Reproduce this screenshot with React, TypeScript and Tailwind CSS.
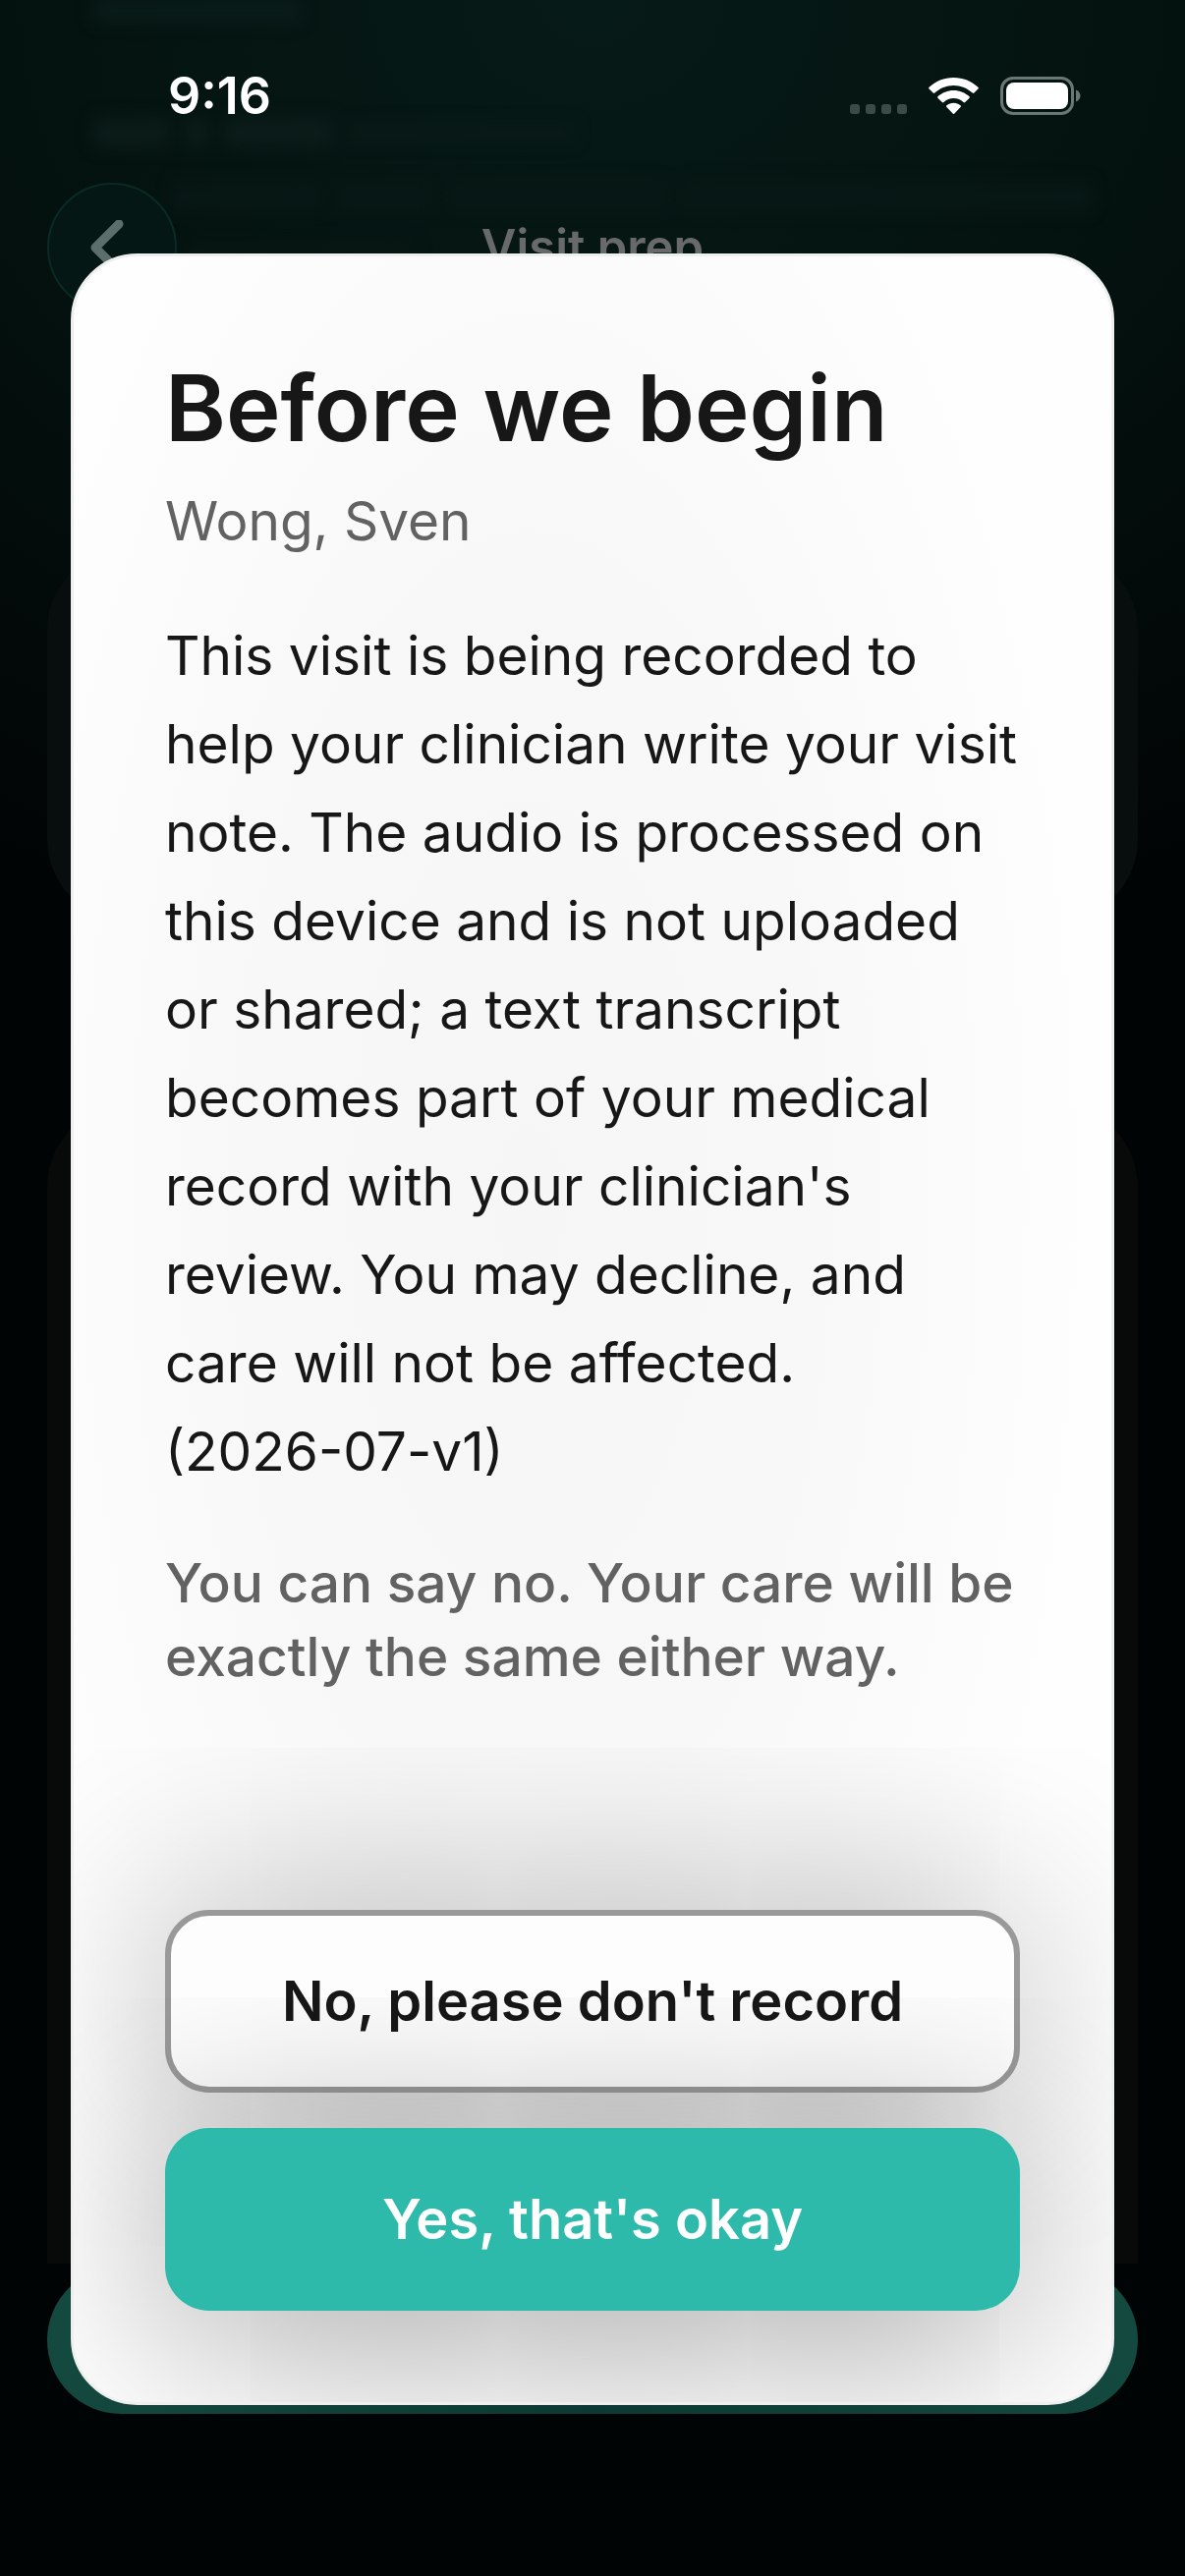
import React from 'react';

const consentParagraph =
  "This visit is being recorded to help your clinician write your visit note. The audio is processed on this device and is not uploaded or shared; a text transcript becomes part of your medical record with your clinician's review. You may decline, and care will not be affected.";

const consentVersion = '(2026-07-v1)';

const StatusBar: React.FC = () => (
  <div className="relative flex h-[186px] items-start justify-between pl-[171px] pr-[106px] pt-[66px]">
    <span className="text-[52px] font-semibold leading-[64px] text-white">9:16</span>
    <div className="flex items-start gap-[22px] pt-3">
      <div className="flex gap-[6px] pt-7">
        {[0, 1, 2, 3].map((dot) => (
          <span key={dot} className="size-[10px] rounded-[3px] bg-[#3c4a48]" />
        ))}
      </div>
      <svg className="h-[39px] w-[51px]" viewBox="0 0 51 39" fill="white">
        <path d="M25.5 1C15.800 1 7 4.700.6 10.800a1.200 1.200 0 0 0 0 1.800l4 4a1.200 1.200 0 0 0 1.700 0C11.500 11.700 18.200 8.900 25.500 8.900s14 2.800 19.200 7.700a1.200 1.200 0 0 0 1.700 0l4-4a1.200 1.200 0 0 0 0-1.800C44 4.700 35.200 1 25.500 1Z" />
        <path d="M25.500 13.900c-6.100 0-11.700 2.400-15.900 6.200a1.200 1.200 0 0 0 0 1.800l4.200 4.200a1.200 1.200 0 0 0 1.700 0c2.700-2.500 6.200-4 10-4s7.300 1.500 10 4a1.200 1.200 0 0 0 1.700 0l4.200-4.200a1.200 1.200 0 0 0 0-1.800c-4.200-3.800-9.800-6.200-15.900-6.200Z" />
        <path d="M25.500 26.800c-2.600 0-5 .9-7 2.500a1.200 1.200 0 0 0-.1 1.800l6.200 6.300a1.200 1.200 0 0 0 1.800 0l6.200-6.300a1.200 1.200 0 0 0-.1-1.800c-2-1.600-4.400-2.500-7-2.500Z" />
      </svg>
      <svg className="h-[39px] w-[82px]" viewBox="0 0 82 39">
        <rect x="1.500" y="1.500" width="72" height="36" rx="11.500" fill="none" stroke="#6a7775" strokeWidth="3" />
        <rect x="6" y="6" width="63" height="27" rx="8" fill="white" />
        <path d="M77 13.500c3 1.200 4.500 3.400 4.500 6s-1.500 4.800-4.500 6Z" fill="#6a7775" />
      </svg>
    </div>
  </div>
);

// Page content that has scrolled up under the translucent navigation bar
const ScrolledContent: React.FC = () => (
  <div aria-hidden="true" className="absolute inset-x-0 top-0 flex flex-col px-24 blur-[8px]">
    <div className="h-[22px] w-[210px] bg-[#0a1c19]" />
    <div className="mt-[98px] flex items-center gap-4">
      <div className="h-[30px] w-[76px] bg-[#0b1c19]" />
      <div className="h-[30px] w-[24px] bg-[#0b1c19]" />
      <div className="h-[30px] w-[110px] bg-[#0b1c19]" />
      <div className="h-[18px] w-[230px] bg-[#091a17]" />
    </div>
    <div className="ml-20 mt-9 flex gap-4">
      <div className="h-[28px] w-[150px] bg-[#081815]" />
      <div className="h-[28px] w-[100px] bg-[#081815]" />
      <div className="h-[28px] w-[220px] bg-[#081815]" />
      <div className="h-[28px] grow bg-[#081815]" />
    </div>
    <div className="ml-24 mt-8 h-[24px] w-[230px] bg-[#071613]" />
  </div>
);

const VisitPrepScreen: React.FC = () => (
  <div className="flex min-h-screen flex-col bg-[radial-gradient(ellipse_100%_38%_at_50%_0%,#061a17_0%,#04120f_50%,#010404_100%)]">
    <ScrolledContent />
    <StatusBar />
    <header className="relative grid grid-cols-[132px_1fr_132px] items-center px-12">
      <button
        type="button"
        aria-label="Back"
        className="flex size-[132px] items-center justify-center rounded-full border-2 border-[#0a2a24] bg-[#051714] pr-2"
      >
        <svg className="h-14 w-9" viewBox="0 0 36 56" fill="none" stroke="#5c6e6b" strokeWidth="9" strokeLinecap="round" strokeLinejoin="round">
          <path d="M29 4 5 28l24 24" />
        </svg>
      </button>
      <h2 className="text-center text-[49px] font-semibold leading-[60px] text-[#68696b]">Visit prep</h2>
    </header>
    <div className="mx-12 mt-[240px] h-[380px] rounded-[84px] bg-[#080e0d]" />
    <div className="mx-12 mt-[186px] grow rounded-t-[84px] bg-[#070a09]" />
    <div className="mx-12 mb-[165px] mt-[3px] h-[150px] rounded-full bg-linear-to-r from-[#14493f] via-[#0c3933] to-[#14493f]" />
  </div>
);

const ConsentDialog: React.FC = () => (
  <section
    role="dialog"
    aria-modal="true"
    aria-labelledby="consent-title"
    className="flex grow flex-col overflow-hidden rounded-[68px] border-[3px] border-[#eef0f0] bg-[radial-gradient(ellipse_56%_60%_at_44%_44%,#f6f6f6_0%,#f8f8f8_50%,#fefefe_100%)] p-[93px]"
  >
    <h1 id="consent-title" className="text-[94px] font-semibold leading-[122px] text-[#171717]">
      Before we begin
    </h1>
    <p className="mt-[18px] text-[55px] leading-[72px] text-[#626262]">Wong, Sven</p>
    <p className="mt-14 text-[55px] leading-[90px] text-[#171717]">
      {consentParagraph} <span className="whitespace-nowrap">{consentVersion}</span>
    </p>
    <p className="mt-[52px] text-[55px] font-medium leading-[75px] text-[#626262]">
      You can say no. Your care will be exactly the same either way.
    </p>
    <div className="mt-auto flex flex-col gap-9">
      <button
        type="button"
        className="h-[186px] rounded-[45px] border-[6px] border-[#999999] bg-[#fdfdfd] text-[56px] font-semibold text-[#171717] shadow-[0_0_200px_rgba(0,0,0,0.32)]"
      >
        No, please don't record
      </button>
      <button
        type="button"
        className="h-[186px] rounded-[45px] bg-[#2dbaaa] text-[56px] font-semibold text-white shadow-[0_24px_200px_rgba(0,0,0,0.4)]"
      >
        Yes, that's okay
      </button>
    </div>
  </section>
);

const App: React.FC = () => (
  <main className="relative min-h-screen font-['Inter',sans-serif]">
    <VisitPrepScreen />
    <div className="absolute inset-0 flex flex-col px-[72px] pb-[174px] pt-[258px]">
      <ConsentDialog />
    </div>
  </main>
);

export default App;
